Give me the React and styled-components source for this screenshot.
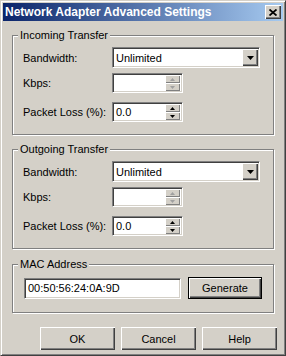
import React from 'react';
import styled, { createGlobalStyle } from 'styled-components';

const GlobalStyle = createGlobalStyle`
  html, body {
    margin: 0;
    padding: 0;
    background: #d4d0c8;
  }
  body {
    font-family: "Liberation Sans", Arial, sans-serif;
    font-size: 11px;
    color: #000;
  }
`;

const Window = styled.div`
  box-sizing: border-box;
  width: 286px;
  height: 356px;
  background: #d4d0c8;
  border: 1px solid;
  border-color: #d4d0c8 #404040 #404040 #d4d0c8;
  box-shadow: inset 1px 1px #fff, inset -1px -1px #808080;
  padding: 2px;
  display: flex;
  flex-direction: column;
`;

const TitleBar = styled.div`
  height: 18px;
  display: flex;
  align-items: center;
  justify-content: space-between;
  padding: 0 2px;
  background: linear-gradient(to right, #0a246a, #a6caf0);
`;

const Title = styled.span`
  color: #fff;
  font-weight: bold;
  font-size: 12px;
  white-space: nowrap;
`;

const CloseButton = styled.button`
  box-sizing: border-box;
  width: 16px;
  height: 14px;
  padding: 0;
  border: none;
  background: #d4d0c8;
  box-shadow: inset 1px 1px #fff, inset -1px -1px #404040, inset -2px -2px #808080;
  display: flex;
  align-items: center;
  justify-content: center;
`;

const Group = styled.fieldset`
  margin: ${(p) => p.$top}px 9px 0;
  padding: 0;
  min-width: 0;
  border: 1px solid #808080;
  box-shadow: 1px 1px 0 #fff, inset 1px 1px 0 #fff;
`;

const Legend = styled.legend`
  margin-left: 5px;
  padding: 0 2px;
  line-height: 13px;
  background: #d4d0c8;
`;

const GroupBody = styled.div`
  display: flex;
  flex-direction: column;
  padding: ${(p) => p.$pad || '5px 0 12px 10px'};
`;

const Row = styled.div`
  display: grid;
  grid-template-columns: 89px auto;
  align-items: center;
  margin-top: ${(p) => p.$mt || 0}px;
`;

const Label = styled.span`
  white-space: nowrap;
`;

const Sunken = styled.div`
  box-sizing: border-box;
  width: ${(p) => p.$w}px;
  height: ${(p) => p.$h || 20}px;
  background: #fff;
  border: 1px solid;
  border-color: #808080 #fff #fff #808080;
  box-shadow: inset 1px 1px #404040, inset -1px -1px #d4d0c8;
  padding: 2px;
  display: flex;
  align-items: center;
`;

const Value = styled.span`
  flex: 1;
  padding-left: 1px;
  white-space: nowrap;
`;

const DropButton = styled.div`
  box-sizing: border-box;
  width: 16px;
  height: 17px;
  margin-right: -1px;
  background: #d4d0c8;
  box-shadow: inset 1px 1px #fff, inset -1px -1px #404040, inset -2px -2px #808080;
  display: flex;
  align-items: center;
  justify-content: center;
`;

const SpinStack = styled.div`
  display: flex;
  flex-direction: column;
  width: 15px;
  height: 16px;
`;

const SpinButton = styled.div`
  box-sizing: border-box;
  flex: 1;
  background: #d4d0c8;
  box-shadow: inset 1px 1px #fff, inset -1px -1px #808080;
  display: flex;
  align-items: center;
  justify-content: center;
`;

const MacRow = styled.div`
  display: flex;
  align-items: center;
  gap: 7px;
`;

const Button = styled.button`
  box-sizing: border-box;
  width: ${(p) => p.$w || 75}px;
  height: ${(p) => p.$h || 23}px;
  padding: 0;
  font-family: "Liberation Sans", Arial, sans-serif;
  font-size: 11px;
  color: #000;
  background: #d4d0c8;
  border: ${(p) => (p.$default ? '1px solid #000' : 'none')};
  box-shadow: inset 1px 1px #fff, inset -1px -1px #404040, inset -2px -2px #808080;
`;

const ButtonBar = styled.div`
  display: flex;
  justify-content: flex-end;
  gap: 6px;
  margin-top: 14px;
  padding-right: 6px;
`;

const Arrow = ({ up, disabled }) => (
  <svg width="5" height="3" viewBox="0 0 5 3">
    <polygon
      points={up ? '2.5,0 5,3 0,3' : '0,0 5,0 2.5,3'}
      fill={disabled ? '#a0a0a0' : '#000'}
    />
  </svg>
);

const Spin = ({ value, disabled }) => (
  <Sunken $w={71}>
    <Value>{value}</Value>
    <SpinStack>
      <SpinButton><Arrow up disabled={disabled} /></SpinButton>
      <SpinButton><Arrow disabled={disabled} /></SpinButton>
    </SpinStack>
  </Sunken>
);

const Combo = ({ value }) => (
  <Sunken $w={148} $h={21}>
    <Value>{value}</Value>
    <DropButton>
      <svg width="7" height="4" viewBox="0 0 7 4">
        <polygon points="0,0 7,0 3.5,4" fill="#000" />
      </svg>
    </DropButton>
  </Sunken>
);

const TransferGroup = ({ title, top }) => (
  <Group $top={top}>
    <Legend>{title}</Legend>
    <GroupBody>
      <Row>
        <Label>Bandwidth:</Label>
        <Combo value="Unlimited" />
      </Row>
      <Row $mt={5}>
        <Label>Kbps:</Label>
        <Spin value="" disabled />
      </Row>
      <Row $mt={9}>
        <Label>Packet Loss (%):</Label>
        <Spin value="0.0" />
      </Row>
    </GroupBody>
  </Group>
);

export default function App() {
  return (
    <>
      <GlobalStyle />
      <Window>
        <TitleBar>
          <Title>Network Adapter Advanced Settings</Title>
          <CloseButton aria-label="Close">
            <svg width="8" height="7" viewBox="0 0 8 7">
              <path d="M0.5 0.5 L7.5 6.5 M7.5 0.5 L0.5 6.5" stroke="#000" strokeWidth="1.8" />
            </svg>
          </CloseButton>
        </TitleBar>
        <TransferGroup title="Incoming Transfer" top={8} />
        <TransferGroup title="Outgoing Transfer" top={8} />
        <Group $top={9}>
          <Legend>MAC Address</Legend>
          <GroupBody $pad="6px 0 13px 11px">
            <MacRow>
              <Sunken $w={157} $h={21}>
                <Value>00:50:56:24:0A:9D</Value>
              </Sunken>
              <Button $w={74} $h={22} $default>Generate</Button>
            </MacRow>
          </GroupBody>
        </Group>
        <ButtonBar>
          <Button>OK</Button>
          <Button>Cancel</Button>
          <Button>Help</Button>
        </ButtonBar>
      </Window>
    </>
  );
}
